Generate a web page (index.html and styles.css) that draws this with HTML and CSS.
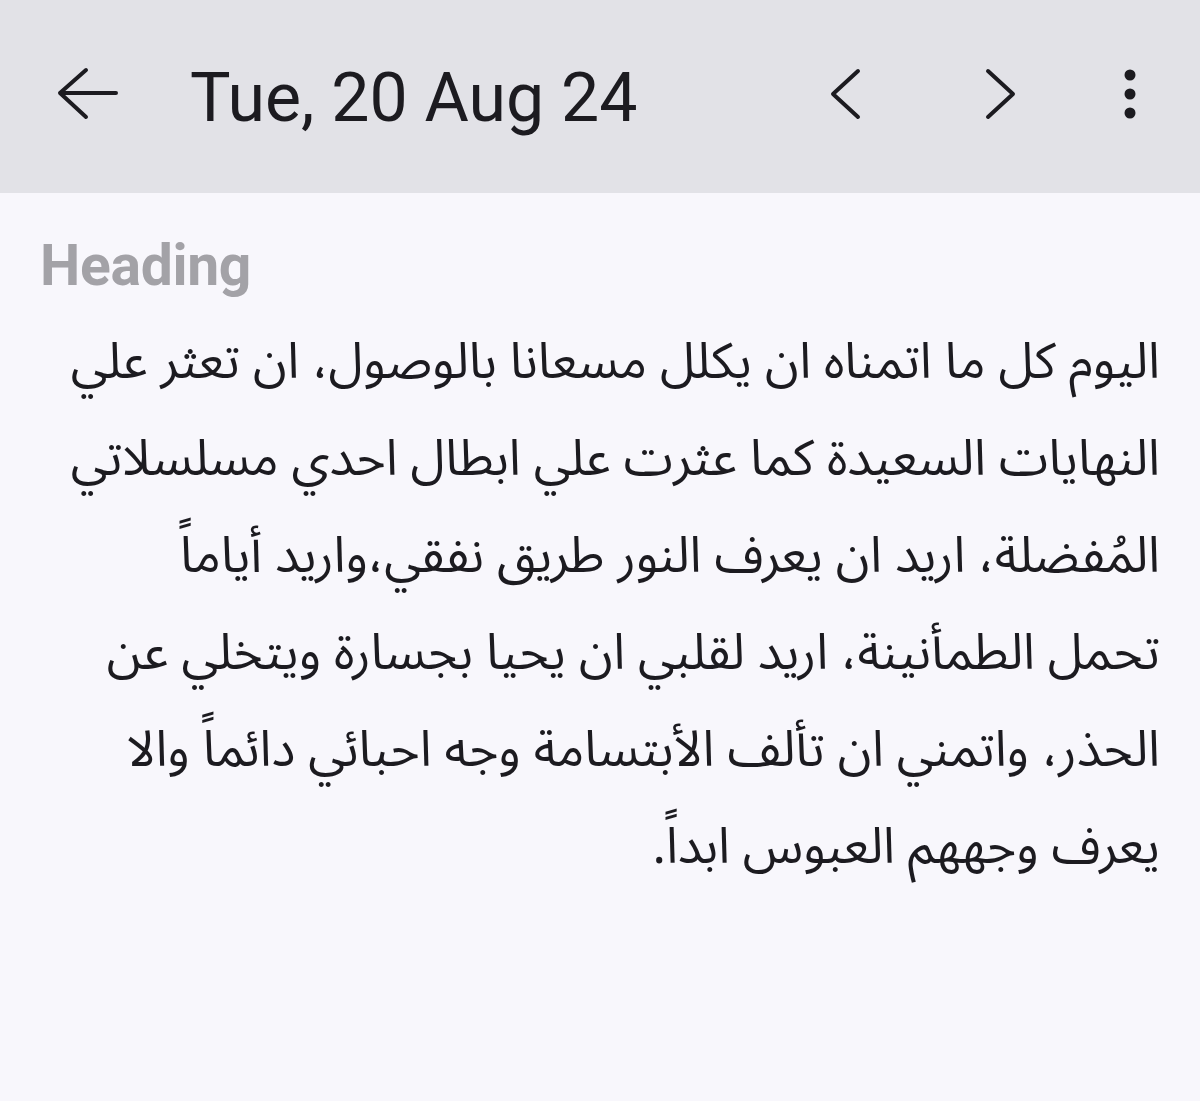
FILE: index.html
```html
<!DOCTYPE html>
<html lang="ar">
<head>
<meta charset="utf-8">
<title>Tue, 20 Aug 24</title>
<link rel="stylesheet" href="styles.css">
</head>
<body>
<header class="appbar">
  <button class="icon-btn back" aria-label="Back">
    <svg width="64" height="56" viewBox="0 0 64 56"><path d="M4 27 H60 M30 4 L4 27 L30 51" fill="none" stroke="#1c1b20" stroke-width="4" stroke-linecap="round" stroke-linejoin="round"/></svg>
  </button>
  <h1 class="title">Tue, 20 Aug 24</h1>
  <div class="actions">
    <button class="icon-btn prev" aria-label="Previous">
      <svg width="34" height="56" viewBox="0 0 34 56"><path d="M28 5 L3 28 L28 51" fill="none" stroke="#1c1b20" stroke-width="4" stroke-linecap="round" stroke-linejoin="round"/></svg>
    </button>
    <button class="icon-btn next" aria-label="Next">
      <svg width="34" height="56" viewBox="0 0 34 56"><path d="M6 5 L31 28 L6 51" fill="none" stroke="#1c1b20" stroke-width="4" stroke-linecap="round" stroke-linejoin="round"/></svg>
    </button>
    <button class="icon-btn more" aria-label="More">
      <svg width="14" height="56" viewBox="0 0 14 56"><circle cx="7" cy="9" r="5.5" fill="#1c1b20"/><circle cx="7" cy="28" r="5.5" fill="#1c1b20"/><circle cx="7" cy="47" r="5.5" fill="#1c1b20"/></svg>
    </button>
  </div>
</header>
<main class="entry">
  <h2 class="heading">Heading</h2>
  <p class="body" dir="rtl">اليوم كل ما اتمناه ان يكلل مسعانا بالوصول، ان تعثر علي<br>النهايات السعيدة كما عثرت علي ابطال احدي مسلسلاتي<br>المُفضلة، اريد ان يعرف النور طريق نفقي،واريد أياماً<br>تحمل الطمأنينة، اريد لقلبي ان يحيا بجسارة ويتخلي عن<br>الحذر، واتمني ان تألف الأبتسامة وجه احبائي دائماً والا<br>يعرف وجههم العبوس ابداً.</p>
</main>
</body>
</html>
```

FILE: styles.css
```css
html, body {
  margin: 0;
  padding: 0;
}
body {
  background: #f8f7fc;
  width: 1200px;
  height: 1101px;
  overflow: hidden;
  font-family: Roboto, "Liberation Sans", sans-serif;
  color: #1c1b20;
}
.appbar {
  height: 193px;
  background: #e2e2e7;
  display: flex;
  align-items: center;
  box-sizing: border-box;
  padding-left: 56px;
}
.icon-btn {
  border: 0;
  background: none;
  padding: 0;
  margin: 0;
  display: flex;
  align-items: center;
  justify-content: center;
}
.back {
  margin-top: -6px;
}
.title {
  margin: 0 0 0 70px;
  font-weight: 400;
  font-size: 68px;
  line-height: 1;
  letter-spacing: 0;
  color: #1c1b20;
  margin-top: 2px;
}
.actions {
  margin-left: auto;
  display: flex;
  align-items: center;
  margin-right: 63px;
  margin-top: -6px;
}
.prev { margin-right: 118px; }
.next { margin-right: 107px; }
.entry {
  padding: 0 40px;
}
.heading {
  margin: 39px 0 0 0;
  font-size: 57px;
  font-weight: 700;
  line-height: 68px;
  color: #a3a2a7;
  letter-spacing: -0.3px;
}
.body {
  margin: 14px 0 0 0;
  font-family: "Noto Sans Arabic", "DejaVu Sans", sans-serif;
  font-size: 50px;
  line-height: 97px;
  white-space: nowrap;
  text-align: right;
  color: #1c1b20;
}
```
